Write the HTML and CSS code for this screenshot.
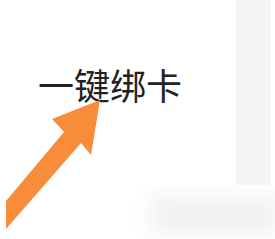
FILE: index.html
```html
<!DOCTYPE html>
<html lang="zh-CN">
<head>
    <meta charset="UTF-8">
    <meta name="viewport" content="width=device-width, initial-scale=1.0">
    <title>一键绑卡</title>
    <link rel="stylesheet" href="styles.css">
</head>
<body>
    <div class="page">
        <div class="top">
            <div class="main">
                <div class="bind-title">一键绑卡</div>
            </div>
            <div class="side"></div>
        </div>
        <div class="bottom">
            <div class="shadow-blob"></div>
        </div>

        <svg class="arrow" width="275" height="239" viewBox="0 0 275 239">
            <polygon fill="#f98c3b" points="100,100 91,155 81,143 6,229 6,201 64,132 52,119"/>
        </svg>
    </div>
</body>
</html>
```

FILE: styles.css
```css
* {
    margin: 0;
    padding: 0;
    box-sizing: border-box;
}

body {
    background-color: #fff;
    font-family: "Noto Sans CJK SC", "Noto Sans", sans-serif;
    overflow: hidden;
}

.page {
    position: relative;
    width: 275px;
    height: 239px;
}

.top {
    display: flex;
    height: 185px;
}

.main {
    width: 236px;
    padding: 62px 0 0 38px;
}

.bind-title {
    font-size: 36px;
    line-height: 44px;
    color: #222;
    white-space: nowrap;
}

.side {
    width: 35px;
    background-color: #f5f5f5;
}

.bottom {
    height: 54px;
    padding: 10px 0 0 150px;
    overflow: hidden;
}

.shadow-blob {
    width: 130px;
    height: 40px;
    background-color: #f2f2f2;
    filter: blur(10px);
}

.arrow {
    position: absolute;
    left: 0;
    top: 0;
}
```
